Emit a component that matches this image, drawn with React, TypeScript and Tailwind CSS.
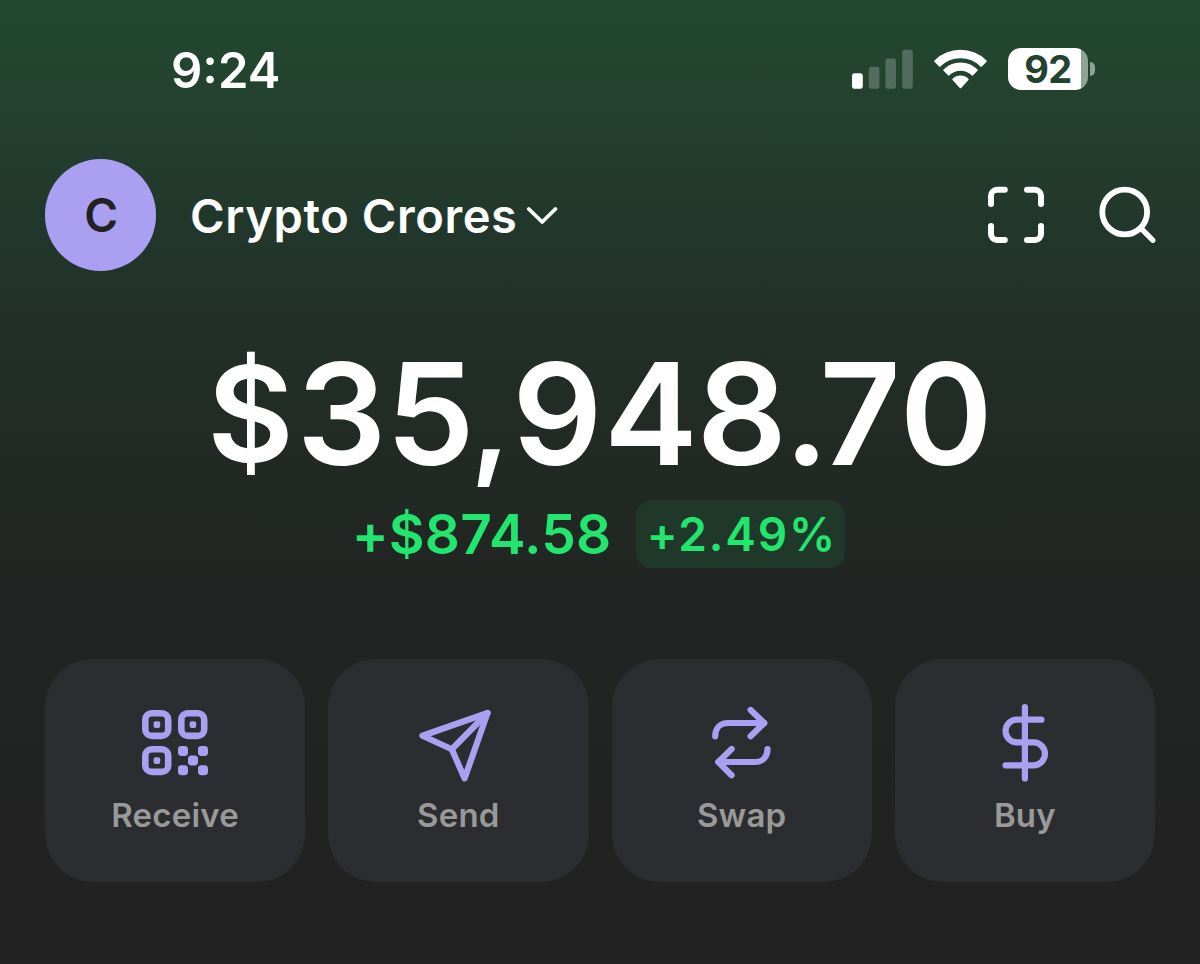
import type { ReactNode } from "react";

function SignalIcon() {
  return (
    <svg className="h-10 w-[62px]" viewBox="852 49 62 40" fill="#fff">
      <rect x="852" y="73.2" width="10.8" height="15.5" rx="2.8" />
      <g opacity="0.22">
        <rect x="868.8" y="66.7" width="10.6" height="22" rx="2.8" />
        <rect x="885.4" y="58.5" width="10.6" height="30.2" rx="2.8" />
        <rect x="902.2" y="49.8" width="10.6" height="38.9" rx="2.8" />
      </g>
    </svg>
  );
}

function WifiIcon() {
  return (
    <svg
      className="h-[42px] w-[56px]"
      viewBox="932 48 56 42"
      fill="#fff"
      stroke="#fff"
      strokeWidth="2"
      strokeLinejoin="round"
    >
      <path d="M935.2 61.1 A36.2 36.2 0 0 1 985.8 61.1 L981.2 65.7 A29.7 29.7 0 0 0 939.8 65.7 Z" />
      <path d="M944.2 70.1 A23.3 23.3 0 0 1 976.8 70.1 L972.3 74.6 A16.9 16.9 0 0 0 948.7 74.6 Z" />
      <path d="M953.3 79.4 A10.4 10.4 0 0 1 967.7 79.4 L960.5 87.2 Z" />
    </svg>
  );
}

function Battery() {
  return (
    <div className="flex items-center gap-[2px]">
      <div className="flex h-[42px] w-[80px] items-center justify-center rounded-[13px] bg-[linear-gradient(90deg,#fff_73px,#8fa397_73px)] text-[38px] leading-none font-bold text-[#23422f]">
        <span className="tracking-[-0.6px]">92</span>
      </div>
      <div className="h-[14px] w-[5px] rounded-r-[6px] bg-[#8fa397]" />
    </div>
  );
}

function ScanIcon() {
  return (
    <svg
      className="size-[58px]"
      viewBox="987 186 58 58"
      fill="none"
      stroke="#fff"
      strokeWidth="6"
      strokeLinecap="round"
      strokeLinejoin="round"
    >
      <path d="M991 204 V195.7 A6 6 0 0 1 997 189.8 H1004.8" />
      <path d="M1027 189.8 H1035 A6 6 0 0 1 1041 195.7 V204" />
      <path d="M1041 226 V234 A6 6 0 0 1 1035 240 H1027" />
      <path d="M1004.8 240 H997 A6 6 0 0 1 991 234 V226" />
    </svg>
  );
}

function SearchIcon() {
  return (
    <svg className="size-[58px]" viewBox="1098 186 58 58" fill="none" stroke="#fff" strokeLinecap="round">
      <circle cx="1124.7" cy="212" r="22.4" strokeWidth="5.8" />
      <path d="M1141 228.3 L1152.7 240.2" strokeWidth="5.4" />
    </svg>
  );
}

function ChevronIcon() {
  return (
    <svg
      className="h-[20px] w-[32px]"
      viewBox="526 206 32 20"
      fill="none"
      stroke="#fff"
      strokeWidth="3.8"
      strokeLinecap="round"
      strokeLinejoin="round"
    >
      <path d="M528.8 210 L542.2 223 L555.4 210" />
    </svg>
  );
}

function QrIcon() {
  const finders = [
    [142, 710],
    [178, 710],
    [142, 746],
  ];
  const dots = [
    [178, 746],
    [198, 746],
    [188, 755.5],
    [178, 765.2],
    [198, 765.2],
  ];
  return (
    <svg className="h-[80px] w-[80px]" viewBox="135 703 80 80" fill="#ab9ff2">
      {finders.map(([x, y]) => (
        <g key={`${x}-${y}`}>
          <rect x={x + 3.3} y={y + 3.3} width="22.9" height="22.6" rx="6.5" fill="none" stroke="#ab9ff2" strokeWidth="6.6" />
          <rect x={x + 11.6} y={y + 11.3} width="6.6" height="6.6" rx="2" />
        </g>
      ))}
      {dots.map(([x, y]) => (
        <rect key={`${x}-${y}`} x={x} y={y} width="10" height="10" rx="3.4" />
      ))}
    </svg>
  );
}

function LineIcon({ viewBox, children }: { viewBox: string; children: ReactNode }) {
  return (
    <svg
      className="h-[80px] w-[80px]"
      viewBox={viewBox}
      fill="none"
      stroke="#ab9ff2"
      strokeWidth="6.2"
      strokeLinecap="round"
      strokeLinejoin="round"
    >
      {children}
    </svg>
  );
}

const actions = [
  { label: "Receive", icon: <QrIcon /> },
  {
    label: "Send",
    icon: (
      <LineIcon viewBox="418.5 703 80 80">
        <path d="M488 713 L422.9 735.7 L452.3 749.2 L465.1 778.4 Z" />
        <path d="M488 713 L452.3 749.2" />
      </LineIcon>
    ),
  },
  {
    label: "Swap",
    icon: (
      <LineIcon viewBox="702.2 703 80 80">
        <path d="M715.4 736.3 C715.4 728.5 720 723 728 723 H764.4" />
        <path d="M750.8 710 L764.4 723 L750.8 736.3" />
        <path d="M767.7 749 C767.7 756.8 763 762 755 762 H718.6" />
        <path d="M731.8 749 L718.6 762 L731.8 775.2" />
      </LineIcon>
    ),
  },
  {
    label: "Buy",
    icon: (
      <LineIcon viewBox="985.1 703 80 80">
        <path d="M1025 707 V778.4" />
        <path d="M1041.6 719.7 H1017 A11.35 11.35 0 0 0 1017 742.4 H1033.6 A11.45 11.45 0 0 1 1033.6 765.3 H1005.6" />
      </LineIcon>
    ),
  },
];

export default function App() {
  return (
    <div className="flex h-[964px] w-[1200px] flex-col overflow-hidden bg-[linear-gradient(180deg,#234831_0px,#23432f_80px,#22382c_210px,#222f29_330px,#222925_460px,#222523_600px,#222323_720px,#222222_860px)] font-['Inter',sans-serif] text-white">
      <header className="flex h-[140px] items-center justify-between pr-[105px] pl-[171px]">
        <span className="pt-px text-[49px] leading-none font-semibold">9:24</span>
        <div className="flex items-center pb-[2px]">
          <SignalIcon />
          <div className="ml-[18px]">
            <WifiIcon />
          </div>
          <div className="ml-[20px]">
            <Battery />
          </div>
        </div>
      </header>

      <div className="mt-[19px] flex h-[112px] items-center pr-[44px] pl-[44.5px]">
        <div className="flex size-[111.5px] items-center justify-center rounded-full bg-[#ab9ff2] pl-[2px] text-[46px] font-semibold text-[#222222]">
          C
        </div>
        <div className="ml-[34px] flex items-center">
          <span className="text-[47px] leading-none font-semibold tracking-[0.6px]">Crypto Crores</span>
          <div className="ml-[8px]">
            <ChevronIcon />
          </div>
        </div>
        <div className="ml-auto flex items-center gap-[53.5px]">
          <ScanIcon />
          <SearchIcon />
        </div>
      </div>

      <div className="mt-[73px] flex h-[140px] items-baseline justify-center text-[141px] leading-[140px] font-semibold whitespace-nowrap">
        <span className="pb-[6px] text-[133px] leading-[134px] tracking-[3px]"><span className="inline-block -translate-y-[3px]">$</span></span>
        <span className="tracking-[-0.5px]">3</span>
        <span className="tracking-[-4.5px]">5</span>
        <span className="text-[128px] leading-[134px] tracking-[1.3px]"><span className="inline-block -translate-y-[2px]">,</span></span>
        <span className="tracking-[1.5px]">9</span>
        <span className="tracking-[-1px]">4</span>
        <span className="tracking-[-3px]">8</span>
        <span className="tracking-[-9.5px]">.</span>
        <span className="tracking-[-1px]">7</span>
        <span>0</span>
      </div>
      <div className="mt-[16px] flex h-[68px] items-center justify-center gap-[25px] pr-[3px] text-[#21e56f]">
        <span className="text-[55px] leading-none font-semibold tracking-[0.2px]">+$874.58</span>
        <span className="flex h-[68px] w-[209px] items-center justify-center rounded-[16px] bg-[#20382a] pl-[2px] text-[46px] font-[560] tracking-[1.8px]">
          +2.49%
        </span>
      </div>

      <div className="mt-[91px] grid grid-cols-4 gap-[23px] px-[45px]">
        {actions.map(({ label, icon }) => (
          <div key={label} className="flex h-[223px] flex-col items-center rounded-[48px] bg-[#2c2d31] pt-[44px]">
            {icon}
            <span className="mt-[15px] text-[33px] leading-[34px] font-semibold tracking-[0.2px] text-[#999999]">{label}</span>
          </div>
        ))}
      </div>
    </div>
  );
}
